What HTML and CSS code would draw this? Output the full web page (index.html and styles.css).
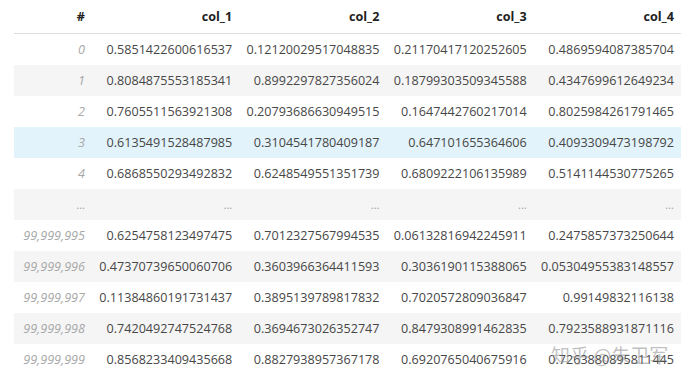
FILE: index.html
```html
<!DOCTYPE html>
<html>
<head>
<meta charset="utf-8">
<link rel="stylesheet" href="styles.css">
</head>
<body>
<div class="wrap">
<table class="df">
  <colgroup>
    <col class="c-idx"><col class="c-val"><col class="c-val"><col class="c-val"><col class="c-val">
  </colgroup>
  <thead>
    <tr><th>#</th><th>col_1</th><th>col_2</th><th>col_3</th><th>col_4</th></tr>
  </thead>
  <tbody>
    <tr><td class="idx">0</td><td>0.5851422600616537</td><td>0.12120029517048835</td><td>0.21170417120252605</td><td>0.4869594087385704</td></tr>
    <tr class="odd"><td class="idx">1</td><td>0.8084875553185341</td><td>0.8992297827356024</td><td>0.18799303509345588</td><td>0.4347699612649234</td></tr>
    <tr><td class="idx">2</td><td>0.7605511563921308</td><td>0.20793686630949515</td><td>0.1647442760217014</td><td>0.8025984261791465</td></tr>
    <tr class="hover"><td class="idx">3</td><td>0.6135491528487985</td><td>0.3104541780409187</td><td>0.647101655364606</td><td>0.4093309473198792</td></tr>
    <tr><td class="idx">4</td><td>0.6868550293492832</td><td>0.6248549551351739</td><td>0.6809222106135989</td><td>0.5141144530775265</td></tr>
    <tr class="odd dots"><td class="idx">...</td><td>...</td><td>...</td><td>...</td><td>...</td></tr>
    <tr><td class="idx">99,999,995</td><td>0.6254758123497475</td><td>0.7012327567994535</td><td>0.06132816942245911</td><td>0.2475857373250644</td></tr>
    <tr class="odd"><td class="idx">99,999,996</td><td>0.47370739650060706</td><td>0.3603966364411593</td><td>0.3036190115388065</td><td>0.05304955383148557</td></tr>
    <tr><td class="idx">99,999,997</td><td>0.11384860191731437</td><td>0.3895139789817832</td><td>0.7020572809036847</td><td>0.99149832116138</td></tr>
    <tr class="odd"><td class="idx">99,999,998</td><td>0.7420492747524768</td><td>0.3694673026352747</td><td>0.8479308991462835</td><td>0.7923588931871116</td></tr>
    <tr><td class="idx">99,999,999</td><td>0.8568233409435668</td><td>0.8827938957367178</td><td>0.6920765040675916</td><td>0.7263880895811445</td></tr>
  </tbody>
</table>
<div class="watermark">知乎 @朱卫军</div>
</div>
</body>
</html>
```
FILE: styles.css
```css
html, body {
  margin: 0;
  padding: 0;
  background: #ffffff;
}
.wrap {
  position: relative;
  width: 689px;
  height: 382px;
  overflow: hidden;
}
.df {
  margin-left: 14px;
  border-collapse: collapse;
  table-layout: fixed;
  width: 667px;
  font-family: "Open Sans", "Noto Sans", sans-serif;
  font-size: 12.6px;
  color: #474747;
}
.c-idx { width: 78px; }
.c-val { width: 147.25px; }
.df th {
  height: 33px;
  padding: 0 7px;
  text-align: right;
  font-weight: bold;
  color: #222;
  border-bottom: 1px solid #dcdcdc;
  vertical-align: middle;
}
.df td {
  height: 31px;
  padding: 0 7px;
  text-align: right;
  white-space: nowrap;
  vertical-align: middle;
}
.df td.idx {
  font-style: italic;
  color: #a8a8a8;
}
.df tr.odd td { background: #f5f5f5; }
.df tr.hover td { background: #e2f3fb; }
.df tr.dots td {
  color: #a0a0a0;
  font-size: 11px;
  font-style: normal;
}
.watermark {
  position: absolute;
  left: 551px;
  top: 341px;
  font-family: "Noto Sans CJK SC", sans-serif;
  font-size: 19px;
  color: rgba(130, 130, 130, 0.5);
  white-space: nowrap;
}
```
